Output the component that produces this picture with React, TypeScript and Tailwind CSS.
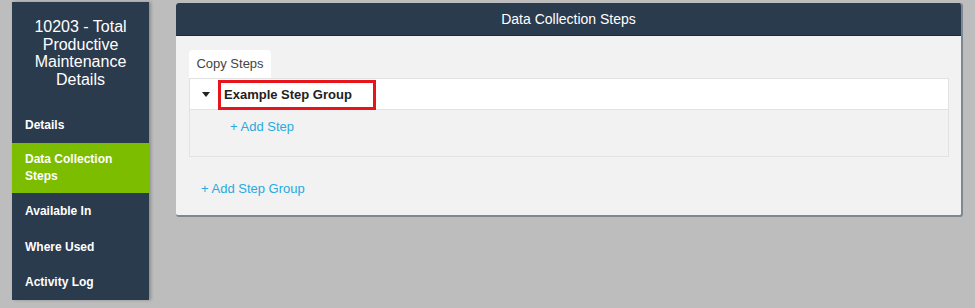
import React from "react";

const navItems = ["Details", "Data Collection Steps", "Available In", "Where Used", "Activity Log"];

function Sidebar() {
  return (
    <aside className="w-[137px] h-[298px] bg-[#2b3b4e] shadow-[2px_0_3px_rgba(0,0,0,0.25)] flex flex-col shrink-0">
      <div className="h-[106px] pt-[16px] px-2 text-center text-white text-[16px] leading-[17.5px]">
        10203 - Total Productive Maintenance Details
      </div>
      {navItems.map((item) => {
        const active = item === "Data Collection Steps";
        return (
          <div
            key={item}
            className={
              active
                ? "h-[51px] bg-[#7dbd00] pl-[13px] pr-6 flex items-center text-white font-bold text-[12px] leading-[17px]"
                : "h-[36px] pl-[13px] flex items-center text-white font-bold text-[12px]"
            }
          >
            {item}
          </div>
        );
      })}
    </aside>
  );
}

function StepGroup() {
  return (
    <div className="w-[760px] border border-[#e2e2e2]">
      <div className="h-[31px] bg-white border-b border-[#e2e2e2] flex items-center">
        <span className="w-0 h-0 ml-[12px] mr-[8px] border-l-[4px] border-r-[4px] border-t-[5px] border-l-transparent border-r-transparent border-t-[#222]" />
        <div className="h-[30px] w-[158px] mt-[2px] border-[3px] border-[#e8141c] flex items-center pl-[3px] font-bold text-[13px] text-[#222]">
          Example Step Group
        </div>
      </div>
      <div className="h-[46px] bg-[#f2f2f2] pl-[40px] pt-[7px] text-[13px] text-[#29a9e0]">+ Add Step</div>
    </div>
  );
}

export default function App() {
  return (
    <div className="w-[975px] h-[308px] bg-[#bdbdbd] flex pl-[12px] pt-[2px] gap-[27px] font-['Liberation_Sans',Arial,sans-serif]">
      <Sidebar />
      <main className="mt-px w-[787px] h-[214px] rounded-[3px] bg-[#f2f2f2] border-r-2 border-b-2 border-[#7f8790] overflow-hidden flex flex-col">
        <div className="h-[33px] bg-[#2b3b4e] flex items-center justify-center text-white text-[14px] border-b border-[#1e2a38]">
          Data Collection Steps
        </div>
        <div className="pl-[13px] pt-[14px]">
          <div className="w-[82px] h-[28px] bg-white rounded-t-[4px] flex items-center justify-center text-[13px] text-[#444]">
            Copy Steps
          </div>
          <StepGroup />
          <div className="pl-[12px] pt-[22px] text-[13px] text-[#29a9e0]">+ Add Step Group</div>
        </div>
      </main>
    </div>
  );
}
